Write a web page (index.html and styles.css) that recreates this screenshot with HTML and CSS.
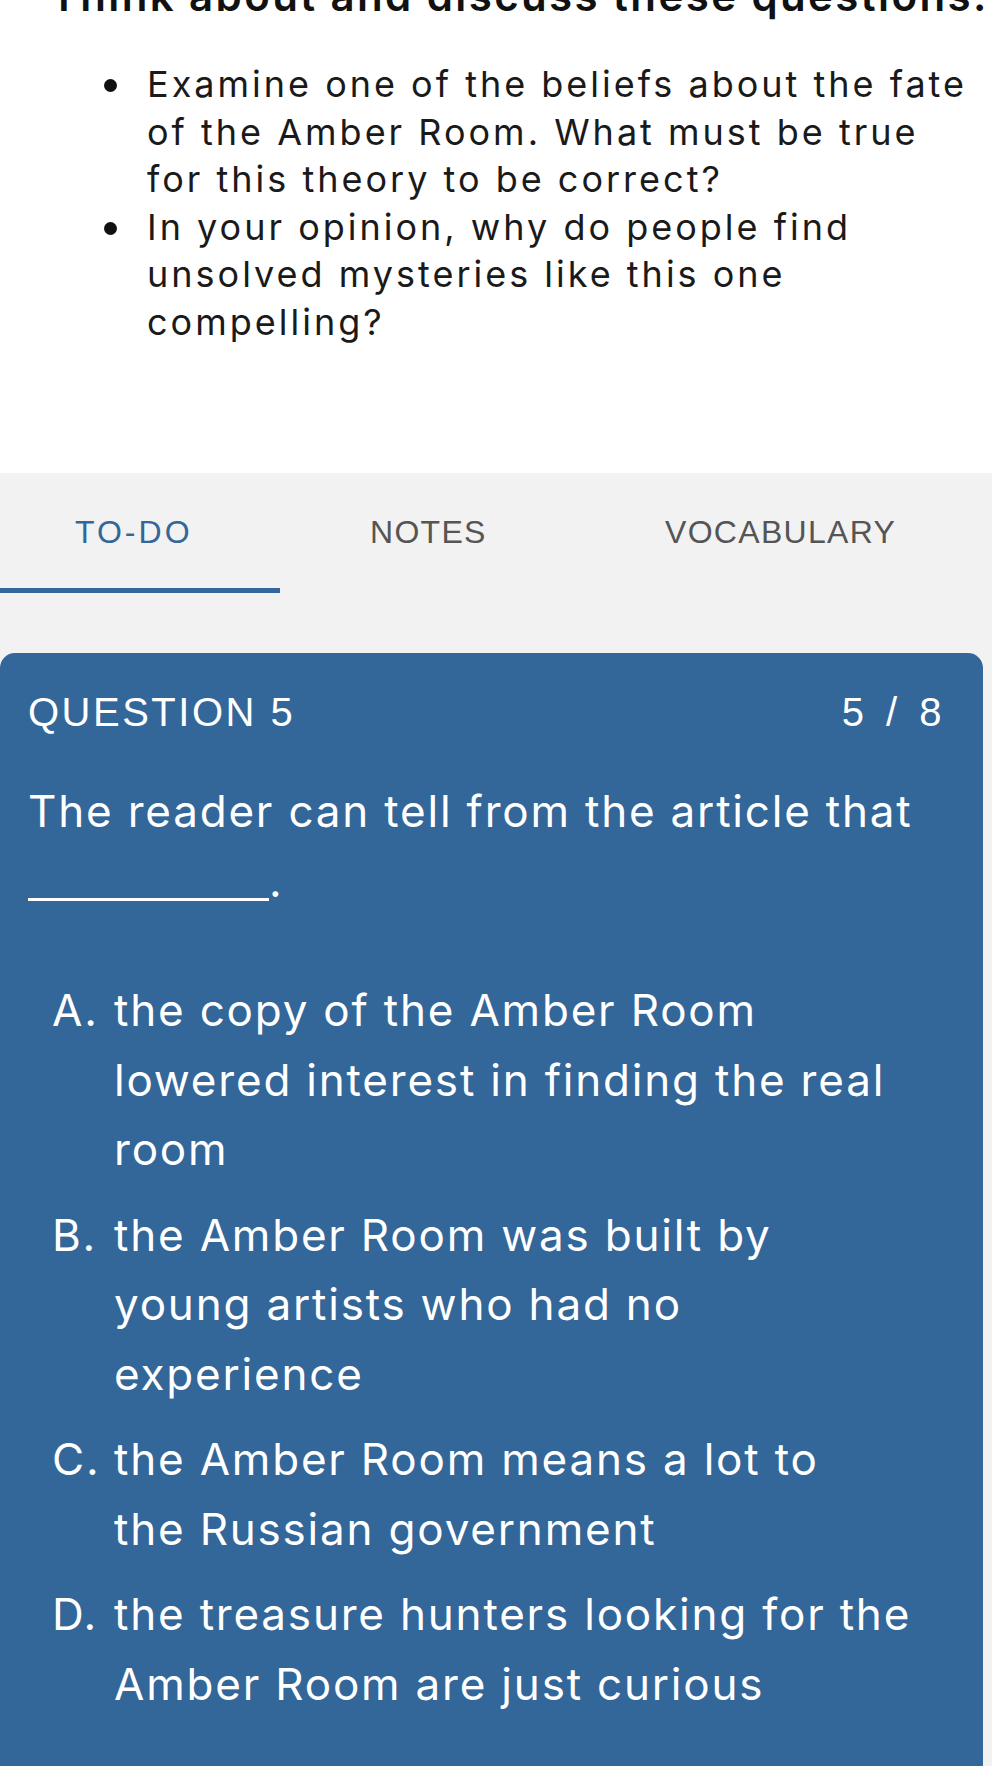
FILE: index.html
```html
<!DOCTYPE html>
<html lang="en">
<head>
<meta charset="utf-8">
<title>Question 5</title>
<link rel="stylesheet" href="styles.css">
</head>
<body>
<section class="intro">
  <h2 class="intro-title">Think about and discuss these questions:</h2>
  <ul class="prompts">
    <li>Examine one of the beliefs about the fate<br>of the Amber Room. What must be true<br>for this theory to be correct?</li>
    <li>In your opinion, why do people find<br>unsolved mysteries like this one<br>compelling?</li>
  </ul>
</section>
<section class="workspace">
  <nav class="tabs">
    <div class="tab active">TO-DO</div>
    <div class="tab">NOTES</div>
    <div class="tab">VOCABULARY</div>
  </nav>
  <div class="card">
    <div class="card-head">
      <span class="q-label">QUESTION 5</span>
      <span class="q-count">5 / 8</span>
    </div>
    <p class="q-text">The reader can tell from the article that<br><span class="blank"></span>.</p>
    <ol class="options">
      <li><span class="opt-letter">A.</span><span class="opt-text">the copy of the Amber Room<br>lowered interest in finding the real<br>room</span></li>
      <li><span class="opt-letter">B.</span><span class="opt-text">the Amber Room was built by<br>young artists who had no<br>experience</span></li>
      <li><span class="opt-letter">C.</span><span class="opt-text">the Amber Room means a lot to<br>the Russian government</span></li>
      <li><span class="opt-letter">D.</span><span class="opt-text">the treasure hunters looking for the<br>Amber Room are just curious</span></li>
    </ol>
  </div>
</section>
</body>
</html>
```

FILE: styles.css
```css
html, body {
  margin: 0;
  padding: 0;
}
body {
  width: 992px;
  min-height: 1766px;
  background: #f2f2f2;
  font-family: "Inter", "Liberation Sans", sans-serif;
  overflow: hidden;
}
.intro {
  background: #ffffff;
  height: 473px;
  overflow: hidden;
}
.intro-title {
  margin: -27px 0 0 50px;
  font-size: 42px;
  letter-spacing: 2.4px;
  line-height: 46px;
  font-weight: 600;
  color: #111;
  white-space: nowrap;
}
.prompts {
  margin: 42px 0 0 0;
  padding: 0 0 0 147px;
  list-style: none;
  font-size: 36px;
  letter-spacing: 3px;
  line-height: 47.5px;
  color: #1a1a1a;
  white-space: nowrap;
}
.prompts li {
  position: relative;
}
.prompts li::before {
  content: "";
  position: absolute;
  left: -43px;
  top: 18px;
  width: 13px;
  height: 13px;
  border-radius: 50%;
  background: #111;
}
.workspace {
  background: #f2f2f2;
}
.tabs {
  display: flex;
  gap: 15px;
  height: 120px;
}
.tab {
  width: 280px;
  box-sizing: border-box;
  padding: 4px 0 0 75px;
  display: flex;
  align-items: center;
  font-family: "Liberation Sans", Arial, sans-serif;
  font-size: 32px;
  letter-spacing: 1.3px;
  color: #555555;
  border-bottom: 5px solid transparent;
}
.tab.active {
  color: #336699;
  letter-spacing: 3px;
  border-bottom-color: #336699;
}
.card {
  margin-top: 60px;
  width: 983px;
  min-height: 1113px;
  box-sizing: border-box;
  background: #336699;
  border-radius: 15px 15px 0 0;
  padding: 34px 39px 0 28px;
  color: #ffffff;
}
.card-head {
  display: flex;
  justify-content: space-between;
  align-items: center;
  font-family: "Liberation Sans", Arial, sans-serif;
  font-size: 40px;
  letter-spacing: 2.5px;
  line-height: 50px;
}
.q-count {
  word-spacing: 6px;
}
.q-text {
  margin: 39px 0 0 0;
  font-size: 44px;
  letter-spacing: 1.8px;
  line-height: 70px;
  white-space: nowrap;
}
.blank {
  display: inline-block;
  width: 241px;
  height: 0;
  border-bottom: 3px solid #ffffff;
  vertical-align: -4px;
}
.options {
  margin: 60px 0 0 0;
  padding: 0 0 0 24px;
  list-style: none;
  font-size: 44px;
  letter-spacing: 1.8px;
  line-height: 69.5px;
}
.options li {
  display: flex;
  margin-bottom: 16px;
}
.opt-letter {
  flex: 0 0 62px;
}
.opt-text {
  flex: 1;
  white-space: nowrap;
}
```
